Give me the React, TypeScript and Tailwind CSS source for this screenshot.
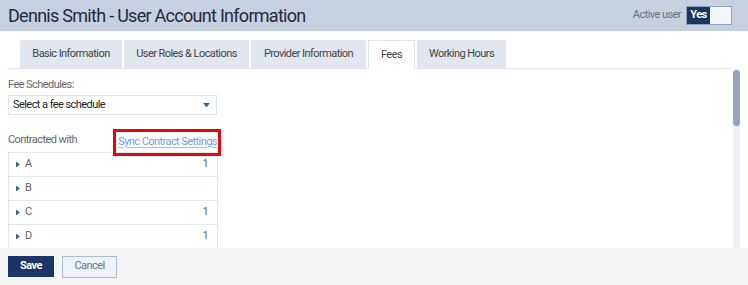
import { useState } from 'react';

const tabs = [
  { label: 'Basic Information', w: 'w-[102px]' },
  { label: 'User Roles & Locations', w: 'w-[125px]' },
  { label: 'Provider Information', w: 'w-[115px]' },
  { label: 'Fees', w: 'w-[47px]' },
  { label: 'Working Hours', w: 'w-[89px]' },
];

const contracts = [
  { name: 'A', count: 1 },
  { name: 'B', count: null },
  { name: 'C', count: 1 },
  { name: 'D', count: 1 },
];

const Caret = () => (
  <svg width="6" height="7" viewBox="0 0 6 7" className="shrink-0">
    <path d="M1 0.5 L5 3.5 L1 6.5 Z" fill="#3b6a91" />
  </svg>
);

export default function App() {
  const [active, setActive] = useState('Fees');

  return (
    <div className="flex h-[285px] w-[748px] flex-col overflow-hidden bg-white font-['Roboto',sans-serif] tracking-[-0.035em]">
      {/* header */}
      <div className="flex h-[31px] shrink-0 items-center justify-between bg-[#c6d0df] pl-2 pr-[16px]">
        <h1 className="text-[18px] leading-none tracking-[-0.04em] text-[#1e2b3c]">Dennis Smith - User Account Information</h1>
        <div className="flex items-center gap-[5px]">
          <span className="text-[11px] text-[#6b7280]">Active user</span>
          <div className="flex h-[19px] border border-[#8fa2bd]">
            <span className="flex w-[23px] items-center justify-center bg-[#1b3564] text-[11px] font-bold text-white">Yes</span>
            <span className="w-[21px] bg-[#f3f6fb]" />
          </div>
        </div>
      </div>

      {/* tabs */}
      <div className="ml-[7px] mr-[18px] mt-[9px] flex h-[29px] shrink-0 gap-[2px] border-b border-[#dfe5ee] pl-[13px]">
        {tabs.map((t) => (
          <button
            key={t.label}
            onClick={() => setActive(t.label)}
            className={
              t.label === active
                ? `${t.w} -mb-px h-[29px] border border-b-0 border-[#dfe5ee] bg-white text-[11px] text-[#444]`
                : `${t.w} h-[28px] bg-[#e2e7ef] text-[11px] text-[#444]`
            }
          >
            {t.label}
          </button>
        ))}
      </div>

      {/* body */}
      <div className="flex min-h-0 flex-1">
        <div className="min-w-0 flex-1 overflow-hidden pl-2 pt-[9px]">
          <div className="text-[11px] leading-[14px] text-[#666]">Fee Schedules:</div>
          <div className="mt-[3px] flex h-[20px] w-[209px] items-center justify-between border border-[#dfe4ec] pl-[4px] pr-[6px]">
            <span className="text-[11px] text-[#222]">Select a fee schedule</span>
            <svg width="7" height="5" viewBox="0 0 7 5">
              <path d="M0 0 H7 L3.5 4.5 Z" fill="#3b6a91" />
            </svg>
          </div>

          <div className="mt-[14px] flex h-[23px] w-[209px] items-center justify-between">
            <span className="text-[11px] text-[#666]">Contracted with</span>
            <span className="relative block leading-[14px]">
              <span className="text-[11px] text-[#6e9cf0] underline decoration-[#9fbdf2] underline-offset-2">Sync Contract Settings</span>
              <span className="pointer-events-none absolute -bottom-[7px] -left-[5px] -right-[4px] -top-[4px] border-[3px] border-[#e4080a]" />
            </span>
          </div>

          <div className="w-[210px] border border-[#e3e7ee]">
            {contracts.map((c) => (
              <div key={c.name} className="flex h-[24px] items-center border-b border-[#e3e7ee] pl-[6px] pr-[9px] text-[11px] text-[#5f5f5f]">
                <Caret />
                <span className="ml-[4px] flex-1">{c.name}</span>
                {c.count !== null && <span>{c.count}</span>}
              </div>
            ))}
          </div>
        </div>

        {/* scrollbar */}
        <div className="mr-[8px] w-[7px] shrink-0 rounded-full bg-[#eef1f8]">
          <div className="mt-px h-[56px] rounded-full bg-[#95a4bd]" />
        </div>
      </div>

      {/* footer */}
      <div className="flex h-[37px] shrink-0 items-center gap-2 bg-[#f4f4f4] px-2">
        <button className="h-[21px] w-[46px] bg-[#1b3564] text-[11px] font-bold text-white">Save</button>
        <button className="h-[22px] w-[55px] border border-[#a9bdd2] bg-[#eef3fb] text-[11px] text-[#5b7898]">Cancel</button>
      </div>
    </div>
  );
}
